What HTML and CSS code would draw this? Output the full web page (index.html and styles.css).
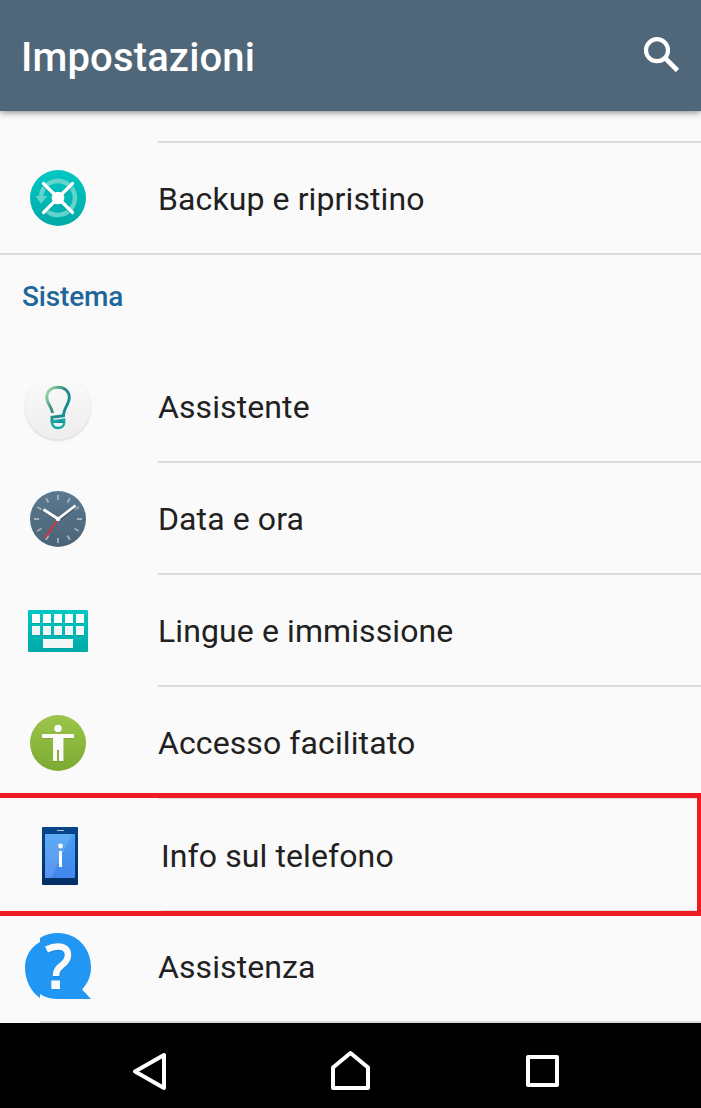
FILE: index.html
```html
<!DOCTYPE html>
<html lang="it">
<head>
<meta charset="utf-8">
<title>Impostazioni</title>
<link rel="stylesheet" href="styles.css">
</head>
<body>
<header class="appbar">
  <h1 class="title">Impostazioni</h1>
  <svg class="search" viewBox="640 34 44 40" fill="none" stroke="#fff" stroke-width="4.2"><circle cx="657" cy="50.200" r="11"/><path d="M665 58L677.500 70.500" stroke-width="4.600"/></svg>
</header>
<main class="content">
  <div class="stub"></div>
  <div class="row">
    <svg class="icon" viewBox="0 143 116 110">
      <defs><linearGradient id="teal" x2="0" y2="1"><stop stop-color="#00c8c4"/><stop offset="1" stop-color="#00a9a7"/></linearGradient></defs>
      <circle cx="58" cy="198" r="28" fill="url(#teal)"/>
      <path d="M41 196A17 17 0 1 1 47 211" fill="none" stroke="#63d3ce" stroke-width="4.500"/>
      <path d="M35.500 196H47.500L41 203.500Z" fill="#63d3ce"/>
      <path d="M44 184L72 212M72 184L44 212" stroke="#079490" stroke-width="3.400" stroke-linecap="round" transform="translate(0 1.500)" opacity=".4"/>
      <path d="M43.500 183.500L72.500 212.500M72.500 183.500L43.500 212.500" stroke="#fff" stroke-width="3.200" stroke-linecap="round"/>
      <circle cx="58" cy="198" r="6.300" fill="#fff"/>
    </svg>
    <span class="label">Backup e ripristino</span>
  </div>
  <h2 class="section">Sistema</h2>
  <div class="row">
    <svg class="icon" viewBox="0 351 116 110">
      <defs>
        <linearGradient id="disc" x2="0" y2="1"><stop stop-color="#fbfbfb"/><stop offset="1" stop-color="#ededed"/></linearGradient>
        <linearGradient id="bulb" gradientUnits="userSpaceOnUse" x1="46" y1="393" x2="67" y2="405"><stop stop-color="#9ad9a0"/><stop offset=".55" stop-color="#348d83"/><stop offset="1" stop-color="#178b93"/></linearGradient>
        <filter id="soft" x="-20%" y="-20%" width="140%" height="140%"><feGaussianBlur stdDeviation="1"/></filter>
      </defs>
      <circle cx="58" cy="408" r="32.500" fill="#bbb" opacity=".7" filter="url(#soft)"/>
      <circle cx="58" cy="407" r="32.700" fill="url(#disc)"/>
      <path d="M52.500 413C52 407 46.800 404 46.800 397.500C46.800 390.500 52 387.200 58 387.200C64.500 387.200 69.300 391.300 69.300 397.500C69.300 404 63.500 408 63.500 415.700L52 417.200V421.500H63" fill="none" stroke="url(#bulb)" stroke-width="2.900"/>
      <path d="M52 421.500L64.200 419.500V422.500C64.200 426 61.500 428 58 428C54.500 428 52 426 52 421.500Z" fill="none" stroke="#15a7a6" stroke-width="2.300"/>
    </svg>
    <span class="label">Assistente</span>
  </div>
  <div class="row">
    <svg class="icon" viewBox="0 463 116 110">
      <defs><linearGradient id="clock" x2="0" y2="1"><stop stop-color="#5b7990"/><stop offset="1" stop-color="#4b6376"/></linearGradient></defs>
      <circle cx="58" cy="519" r="28" fill="url(#clock)"/>
      <g stroke="#a4b0b8" stroke-width="1.900"><path id="ticks" d="M58 495V500M58 538V543M34 519H39M77 519H82"/><use href="#ticks" transform="rotate(30 58 519)"/><use href="#ticks" transform="rotate(60 58 519)"/></g>
      <path d="M44 511L58 521L76 507" fill="none" stroke="#344a5b" stroke-width="2.500" opacity=".5"/>
      <path d="M58 519L45.500 537.500" stroke="#e22f35" stroke-width="1.700"/>
      <path d="M43.500 509.500L58 519" stroke="#fff" stroke-width="3"/><path d="M58 519L75.500 505.500" stroke="#fff" stroke-width="2.500"/>
      <circle cx="58" cy="519" r="2.300" fill="#fff"/>
    </svg>
    <span class="label">Data e ora</span>
  </div>
  <div class="row">
    <svg class="icon" viewBox="0 575 116 110">
      <rect x="28" y="610" width="60" height="42" rx="1.200" fill="url(#teal)"/>
      <path d="M32 614h8v9h-8zM43 614h8v9h-8zM54 614h8v9h-8zM65 614h8v9h-8zM76 614h8v9h-8zM32 626h8v9h-8zM43 626h8v9h-8zM54 626h8v9h-8zM65 626h8v9h-8zM76 626h8v9h-8zM43 639h30v9H43z" fill="#078e8c" opacity=".4" transform="translate(0 1)"/>
      <path d="M32 614h8v9h-8zM43 614h8v9h-8zM54 614h8v9h-8zM65 614h8v9h-8zM76 614h8v9h-8z" fill="#fff"/>
      <path d="M32 626h8v9h-8zM43 626h8v9h-8zM54 626h8v9h-8zM65 626h8v9h-8zM76 626h8v9h-8zM43 639h30v9H43z" fill="#f5f6f6"/>
    </svg>
    <span class="label">Lingue e immissione</span>
  </div>
  <div class="row row-last">
    <svg class="icon" viewBox="0 687 116 110">
      <defs><linearGradient id="green" x2="0" y2="1"><stop stop-color="#9cc54a"/><stop offset="1" stop-color="#7caa32"/></linearGradient></defs>
      <circle cx="58" cy="743" r="28" fill="url(#green)"/>
      <g fill="#5e8b20" opacity=".35" transform="translate(0 1)"><circle cx="58" cy="728.500" r="3.800"/><path d="M42 734H74V738H63.500V761H59V750H57V761H53V738H42Z"/></g>
      <g fill="#fafafa"><circle cx="58" cy="728.500" r="3.800"/><path d="M42 734H74V738H63.500V761H59V750H57V761H53V738H42Z"/></g>
    </svg>
    <span class="label">Accesso facilitato</span>
  </div>
  <div class="row row-marked">
    <svg class="icon" viewBox="0 799 116 110">
      <defs>
        <linearGradient id="case" x2="0" y2="1"><stop stop-color="#08458a"/><stop offset="1" stop-color="#042f66"/></linearGradient>
        <linearGradient id="screen" x2="0" y2="1"><stop stop-color="#47a0f2"/><stop offset="1" stop-color="#4285ee"/></linearGradient>
      </defs>
      <rect x="42" y="827" width="36" height="58" rx="1" fill="url(#case)"/>
      <rect x="45" y="834" width="30" height="44" fill="url(#screen)"/>
      <path d="M45 834H72L51 878H45Z" fill="#fff" opacity=".13"/>
      <path d="M57 830.500H64" stroke="#aec5df"/>
      <circle cx="60.500" cy="846" r="2.400" fill="#fff"/><path d="M59 851h3v16h-3z" fill="#fff"/>
    </svg>
    <span class="label">Info sul telefono</span>
  </div>
  <div class="row row-help">
    <svg class="icon" viewBox="0 916 116 106">
      <path d="M40 938C45 934.500 51 933 58 933C77 933 91 948 91 967C91 976 88 983 82 989.500L91 999H58C51 999 45 997.500 40 994V998C31 992 25 980 25 967.500C25 956 31 947 40 942Z" fill="#2196f3"/>
      <path d="M47 949.500C51 947.500 54 946.500 58 946.500C64.500 946.500 68 949.500 68 955C68 960 65.500 962.500 61.500 965.500C58 968.500 56 970.500 56 976" fill="none" stroke="#1479cb" stroke-width="6.500" opacity=".35" transform="translate(.5 1.500)"/>
      <path d="M46.500 949.500C50.500 947.500 54 946.500 58 946.500C64.500 946.500 68 949.500 68 955C68 960 65.500 962.500 61.500 965.500C58 968.500 56 970.500 56 976" fill="none" stroke="#fafafa" stroke-width="6.500"/>
      <rect x="51.300" y="980.500" width="8.700" height="8.500" fill="#fafafa"/>
    </svg>
    <span class="label">Assistenza</span>
  </div>
</main>
<nav class="navbar">
  <svg class="navicons" viewBox="0 1023 701 85" fill="none" stroke="#fff" stroke-width="4" stroke-linejoin="round">
    <path d="M164 1055V1088L135 1071.500Z"/>
    <path d="M333 1067.500L350.500 1053L368 1067.500V1088H333Z"/>
    <rect x="528" y="1057" width="29" height="28"/>
  </svg>
</nav>
</body>
</html>
```

FILE: styles.css
```css
* { box-sizing: border-box; }
body {
  margin: 0;
  width: 701px;
  height: 1108px;
  overflow: hidden;
  background: #fafafa;
  color: #212121;
  font-family: Roboto, sans-serif;
}
.appbar {
  height: 111px;
  padding: 3px 17px 0 21px;
  display: flex;
  align-items: center;
  justify-content: space-between;
  background: #506679;
  box-shadow: 0 1px 7px rgba(0, 0, 0, .5);
}
.title {
  margin: 0;
  font-size: 40px;
  font-weight: 500;
  letter-spacing: .15px;
  color: #fff;
}
.search { width: 44px; height: 40px; margin-bottom: 6px; }
.content { display: flex; flex-direction: column; }
.stub { height: 32px; }
.stub, .row {
  background: linear-gradient(#dcdcdc, #dcdcdc) 158px 100% / 100% 2px no-repeat;
}
.row { height: 112px; display: flex; }
.icon { flex: none; width: 116px; height: 110px; }
.label {
  margin-left: 42px;
  padding-top: 1px;
  font-size: 32px;
  line-height: 110px;
  letter-spacing: .1px;
  white-space: nowrap;
}
.stub + .row { background-position: 0 100%; }
.section {
  height: 96px;
  margin: 0;
  padding: 0 22px;
  font-size: 28px;
  font-weight: 500;
  line-height: 84px;
  letter-spacing: -.15px;
  color: #1f669b;
}
.row-last { height: 106px; background: none; }
.row-marked {
  height: 123px;
  border: solid #ef1b23;
  border-width: 5px 4px 5px 0;
  background:
    linear-gradient(#dcdcdc, #dcdcdc) 158px 0 / 100% 1px no-repeat,
    linear-gradient(#dcdcdc, #dcdcdc) 161px 100% / 100% 1px no-repeat;
}
.row-marked .icon { margin-top: 1px; }
.row-marked .label { margin-left: 45px; padding-top: 3px; }
.row-help { height: 107px; background-position: 40px 100%; }
.row-help .icon { height: 106px; }
.row-help .label { line-height: 100px; }
.navbar { height: 85px; background: #000; }
.navicons { display: block; width: 701px; height: 85px; }
```
